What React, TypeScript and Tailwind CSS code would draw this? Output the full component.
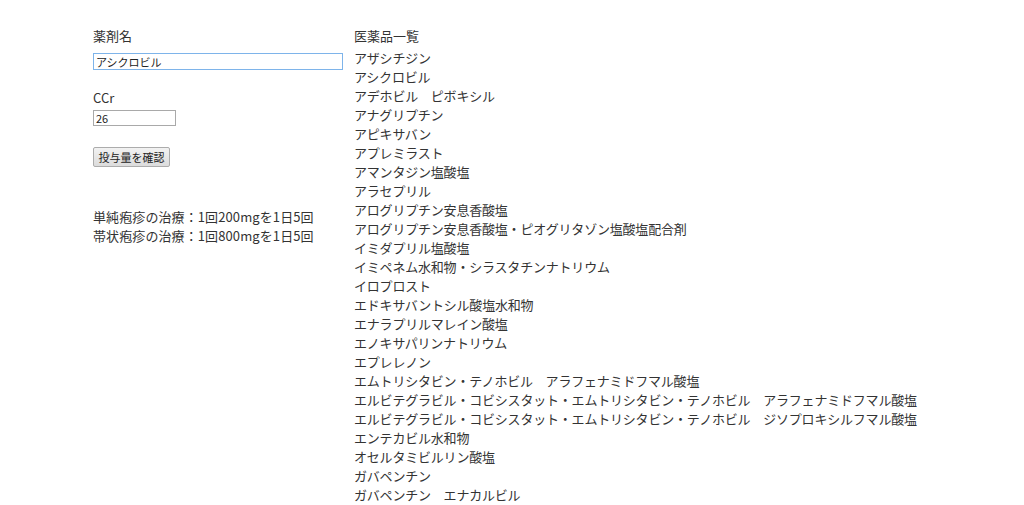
import React from 'react';

const drugs = [
  'アザシチジン',
  'アシクロビル',
  'アデホビル　ピボキシル',
  'アナグリプチン',
  'アピキサバン',
  'アプレミラスト',
  'アマンタジン塩酸塩',
  'アラセプリル',
  'アログリプチン安息香酸塩',
  'アログリプチン安息香酸塩・ピオグリタゾン塩酸塩配合剤',
  'イミダプリル塩酸塩',
  'イミペネム水和物・シラスタチンナトリウム',
  'イロプロスト',
  'エドキサバントシル酸塩水和物',
  'エナラプリルマレイン酸塩',
  'エノキサパリンナトリウム',
  'エプレレノン',
  'エムトリシタビン・テノホビル　アラフェナミドフマル酸塩',
  'エルビテグラビル・コビシスタット・エムトリシタビン・テノホビル　アラフェナミドフマル酸塩',
  'エルビテグラビル・コビシスタット・エムトリシタビン・テノホビル　ジソプロキシルフマル酸塩',
  'エンテカビル水和物',
  'オセルタミビルリン酸塩',
  'ガバペンチン',
  'ガバペンチン　エナカルビル',
];

export default function App() {
  return (
    <div
      className="w-[1024px] h-[505px] overflow-hidden bg-white text-[#333] text-[13px] leading-[19px] pl-[93px] pt-[26px] flex"
      style={{ fontFamily: '"Noto Sans CJK JP", "Noto Sans", sans-serif' }}
    >
      {/* 入力エリア */}
      <div className="w-[261px] flex flex-col items-start">
        <div>薬剤名</div>
        <input
          defaultValue="アシクロビル"
          className="mt-[8px] w-[250px] h-[17px] px-[2px] text-[11px] leading-[15px] text-[#222] border border-[#7eb4ea] outline-none"
        />
        <div className="mt-[18px]">CCr</div>
        <input
          defaultValue="26"
          className="mt-[3px] w-[83px] h-[16px] px-[2px] text-[11px] leading-[14px] text-[#222] border border-[#a9a9a9] outline-none"
        />
        <button className="mt-[21px] w-[77px] h-[20px] px-0 text-[11px] leading-[18px] text-[#222] border border-[#acacac] rounded-[2px] bg-gradient-to-b from-[#f2f2f2] to-[#dcdcdc]">
          投与量を確認
        </button>
        <div className="mt-[40px] tracking-[0.1px]">
          <div>単純疱疹の治療：1回200mgを1日5回</div>
          <div>帯状疱疹の治療：1回800mgを1日5回</div>
        </div>
      </div>

      {/* 医薬品一覧 */}
      <div className="flex flex-col">
        <div>医薬品一覧</div>
        <ul className="mt-[3px] tracking-[-0.2px]">
          {drugs.map((d, i) => (
            <li key={i} className="whitespace-nowrap">
              {d}
            </li>
          ))}
        </ul>
      </div>
    </div>
  );
}
